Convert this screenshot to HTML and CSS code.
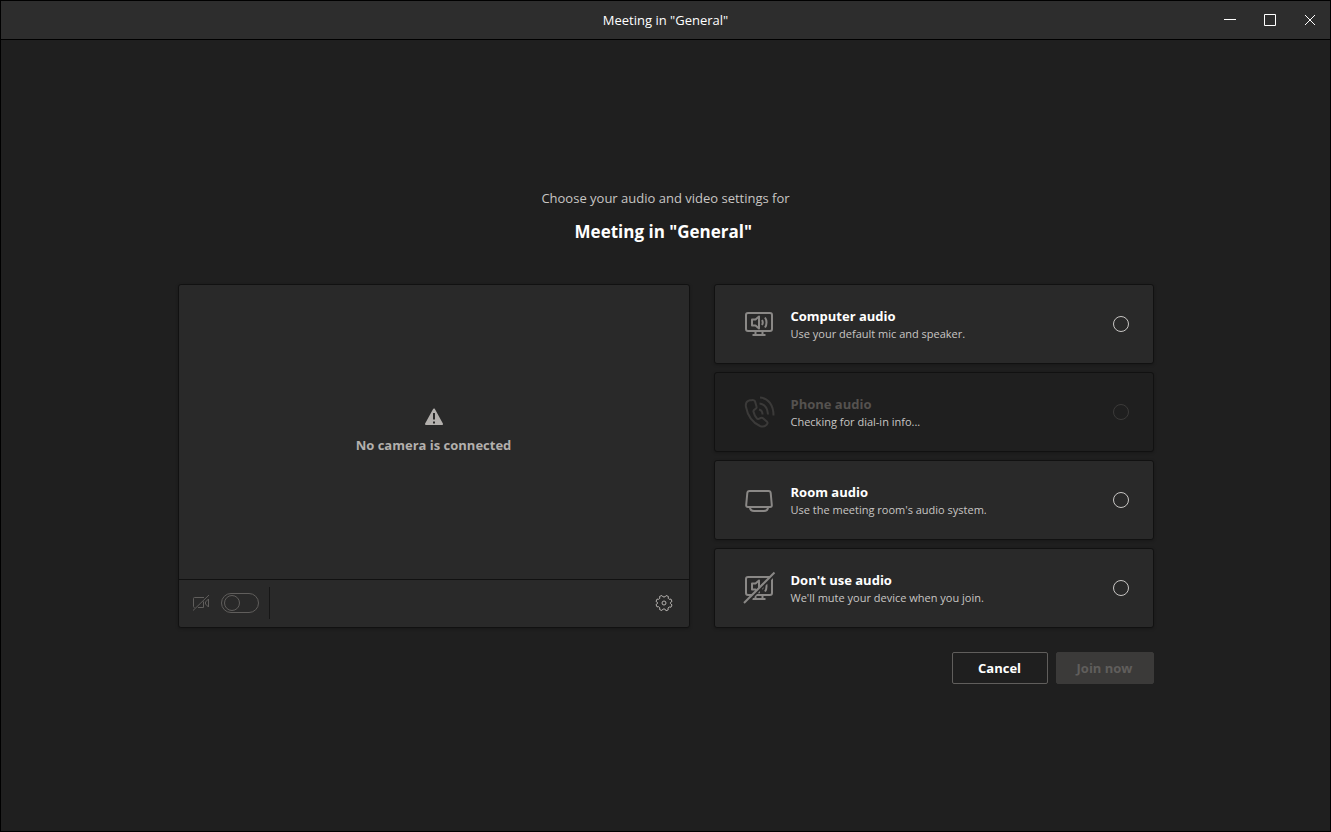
FILE: index.html
```html
<!DOCTYPE html>
<html lang="en">
<head>
<meta charset="utf-8">
<title>Meeting in "General"</title>
<link rel="stylesheet" href="styles.css">
</head>
<body>
<svg class="symbols" aria-hidden="true">
  <symbol id="monitor" viewBox="0 0 32 32">
    <rect x="3" y="5" width="26" height="18" rx="2"/>
    <path d="M12.500 23v3M19.500 23v3M9.500 27h13"/>
    <path d="M9 11.500h3.500l3.500-3v12l-3.500-3H9zM19 12c.9 1.500.9 3.500 0 5M22 9.500c2 2.800 2 7.200 0 10"/>
  </symbol>
</svg>
<div class="window">
  <header class="titlebar">
    <span class="titlebar-name">Meeting in "General"</span>
    <div class="window-controls">
      <button type="button" aria-label="Minimize"><svg viewBox="0 0 16 16"><path d="M2 7.500h12"/></svg></button>
      <button type="button" aria-label="Maximize"><svg viewBox="0 0 16 16"><path d="M2.500 2.500h11v11h-11z"/></svg></button>
      <button type="button" aria-label="Close"><svg viewBox="0 0 16 16"><path d="M3 3l10 10M13 3L3 13"/></svg></button>
    </div>
  </header>
  <main class="prejoin">
    <p class="lead">Choose your audio and video settings for</p>
    <h1 class="meeting-title">Meeting in "General"&nbsp;</h1>
    <form class="settings">
      <section class="preview">
        <div class="preview-stage">
          <svg class="warning" viewBox="0 0 20 18" aria-hidden="true"><path class="warning-shape" d="M10 1.500L18 16H2z"/><path class="warning-mark" d="M10 5v6.500M10 13.500v2"/></svg>
          <p class="preview-message">No camera is connected</p>
        </div>
        <div class="preview-bar">
          <svg class="camera" viewBox="0 0 18 18" aria-hidden="true"><path d="M12 3.500H2.500q-1 0-1 1v8q0 1 1 1M6 13.500h5.500v-6M13.500 8l3-3v8l-3-3zM1 16.500L17 1"/></svg>
          <input class="toggle" type="checkbox" role="switch" aria-label="Camera" disabled>
          <span class="divider"></span>
          <button class="gear" type="button" aria-label="Device settings"><svg viewBox="0 0 18 18"><path d="M6.900 1.500L8 2.900h2l1.100-1.400 2.300 1-.2 1.800 1 1 1.800-.2 1 2.300L15.400 8.500v1l1.600 1.400-1 2.300-1.800-.2-1.200 1.100.2 1.800-2.200.9L9.900 15H8.100L6.900 16.500l-2.300-.9.200-1.800-1.100-1.100-1.700.2-1-2.300L2.500 9.500v-1L1 7.400l1-2.300 1.700.2 1.100-1-.2-1.900z"/><circle cx="9" cy="9" r="2"/></svg></button>
        </div>
      </section>
      <div class="options">
        <label class="option">
          <svg class="option-icon" viewBox="0 0 32 32" aria-hidden="true"><use href="#monitor"/></svg>
          <span class="option-text"><strong>Computer audio</strong><small>Use your default mic and speaker.</small></span>
          <input type="radio" name="audio">
        </label>
        <label class="option is-disabled">
          <svg class="option-icon" viewBox="0 0 32 32" aria-hidden="true"><path d="M6.500 4.300l-1.200.6C3 6 2.500 8.500 3 11c1.500 8 6.500 15.500 14 19 2.300 1 4.300.8 6-.8l1-1c.8-.9.700-2-.2-2.800l-3.500-3c-.8-.7-1.700-.8-2.600-.4l-2 .9c-.8.300-1.400.1-1.900-.6-1.700-2-2.800-4.200-3.300-6.500-.2-.8 0-1.400.7-1.900l1.500-1.100c.8-.6 1.100-1.400.8-2.300l-1.300-4.600c-.4-1.300-1.800-2.200-3.700-1.600z"/><path d="M16 13.500a5 5 0 0 1 3.500 5M16.500 7.500c5.500.5 8 4.500 8.500 11M17 1.500c8.500.5 13.500 8 13.500 18"/></svg>
          <span class="option-text"><strong>Phone audio</strong><small>Checking for dial-in info...</small></span>
          <input type="radio" name="audio" disabled>
        </label>
        <label class="option">
          <svg class="option-icon" viewBox="0 0 32 32" aria-hidden="true"><path d="M6.500 7h19q2 0 2.200 2l1.100 12q.2 2-1.800 2H5q-2 0-1.800-2L4.300 9q.2-2 2.200-2zM7 23q0 4 4 4h10q4 0 4-4"/></svg>
          <span class="option-text"><strong>Room audio</strong><small>Use the meeting room's audio system.</small></span>
          <input type="radio" name="audio">
        </label>
        <label class="option">
          <svg class="option-icon" viewBox="0 0 32 32" aria-hidden="true"><use href="#monitor"/><path class="slash-gap" d="M2 32L33 1"/><path d="M1 31L31.500.5"/></svg>
          <span class="option-text"><strong>Don't use audio</strong><small>We'll mute your device when you join.</small></span>
          <input type="radio" name="audio">
        </label>
      </div>
      <div class="actions">
        <button class="cancel" type="button">Cancel</button>
        <button class="join" type="submit" disabled>Join now</button>
      </div>
    </form>
  </main>
</div>
</body>
</html>
```
FILE: styles.css
```css
* { box-sizing: border-box; }
body {
  margin: 0;
  background: #1f1f1f;
  color: #fff;
  font: 13px/20px "Open Sans", "Noto Sans", sans-serif;
}
p, h1 { margin: 0; }
button, input { font: inherit; margin: 0; }
button { padding: 0; border: 0; background: none; color: inherit; }
svg { fill: none; stroke: currentColor; display: block; }
.symbols { position: absolute; width: 0; height: 0; }
.window {
  display: flex;
  flex-direction: column;
  min-height: 100vh;
  border: 1px solid #000;
}
.titlebar {
  display: grid;
  grid-template-columns: 1fr auto 1fr;
  align-items: center;
  height: 39px;
  border-bottom: 1px solid #000;
  background: #2d2d2d;
}
.titlebar-name { grid-column: 2; }
.window-controls { display: flex; justify-content: flex-end; }
.window-controls button {
  display: grid;
  place-items: center;
  width: 40px;
  height: 38px;
}
.window-controls svg { width: 16px; height: 16px; }
.prejoin {
  flex: 1;
  display: flex;
  flex-direction: column;
  align-items: center;
  justify-content: center;
  padding: 0 24px;
}
.lead { color: #c8c6c4; }
.meeting-title {
  margin: 12px 0 40px;
  font-size: 17px;
  line-height: 24px;
  font-weight: 700;
}
.settings {
  display: grid;
  grid-template-columns: 512fr 440fr;
  gap: 24px;
  width: 100%;
  max-width: 976px;
}
.preview, .option {
  border: 1px solid #111;
  border-radius: 3px;
  background: #292929;
  box-shadow: 0 1px 3px #00000040;
}
.preview { display: flex; flex-direction: column; }
.preview-stage {
  flex: 1;
  display: flex;
  flex-direction: column;
  align-items: center;
  justify-content: center;
  gap: 9px;
  color: #b3b0ad;
}
.preview-message { font-weight: 700; }
.warning { width: 20px; height: 18px; }
.warning-shape { fill: currentColor; stroke-width: 2; stroke-linejoin: round; }
.warning-mark { stroke: #292929; stroke-width: 2; }
.preview-bar {
  display: flex;
  align-items: center;
  height: 48px;
  padding: 0 12px 0 13px;
  border-top: 1px solid #111;
}
.camera { width: 18px; height: 18px; color: #605e5c; }
.toggle {
  appearance: none;
  display: flex;
  align-items: center;
  width: 38px;
  height: 20px;
  margin-left: 11px;
  padding: 0 2px;
  border: 1px solid #605e5c;
  border-radius: 10px;
}
.toggle::before {
  content: "";
  width: 14px;
  height: 14px;
  border: 1px solid #605e5c;
  border-radius: 50%;
}
.divider { width: 1px; height: 32px; margin-left: 10px; background: #161616; }
.gear { margin-left: auto; padding: 4px; color: #b3b0ad; }
.gear svg { width: 18px; height: 18px; }
.options { display: grid; gap: 8px; }
.option {
  display: flex;
  align-items: center;
  min-height: 80px;
  padding: 0 24px 0 28px;
}
.option-icon {
  width: 32px;
  height: 32px;
  margin-right: 16px;
  color: #8a8886;
  stroke-width: 2;
  stroke-linejoin: round;
  overflow: visible;
}
.slash-gap { stroke: #292929; stroke-width: 3; }
.option-text { flex: 1; }
.option strong, .option small { display: block; }
.option strong { font-weight: 700; }
.option small { color: #c8c6c4; font-size: 11px; line-height: 16px; }
.option input {
  appearance: none;
  width: 16px;
  height: 16px;
  border: 1px solid #c8c6c4;
  border-radius: 50%;
}
.is-disabled { background: #1f1f1f; }
.is-disabled .option-icon { color: #3b3a39; }
.is-disabled strong { color: #55524f; }
.is-disabled input { border-color: #3b3a39; }
.actions {
  grid-column: 1 / -1;
  display: flex;
  justify-content: flex-end;
  gap: 8px;
}
.actions button {
  height: 32px;
  min-width: 96px;
  padding: 0 20px;
  border: 1px solid #605e5c;
  border-radius: 2px;
  font-weight: 700;
}
.actions .join { border-color: #3b3a39; background: #3b3a39; color: #605e5c; }
```
